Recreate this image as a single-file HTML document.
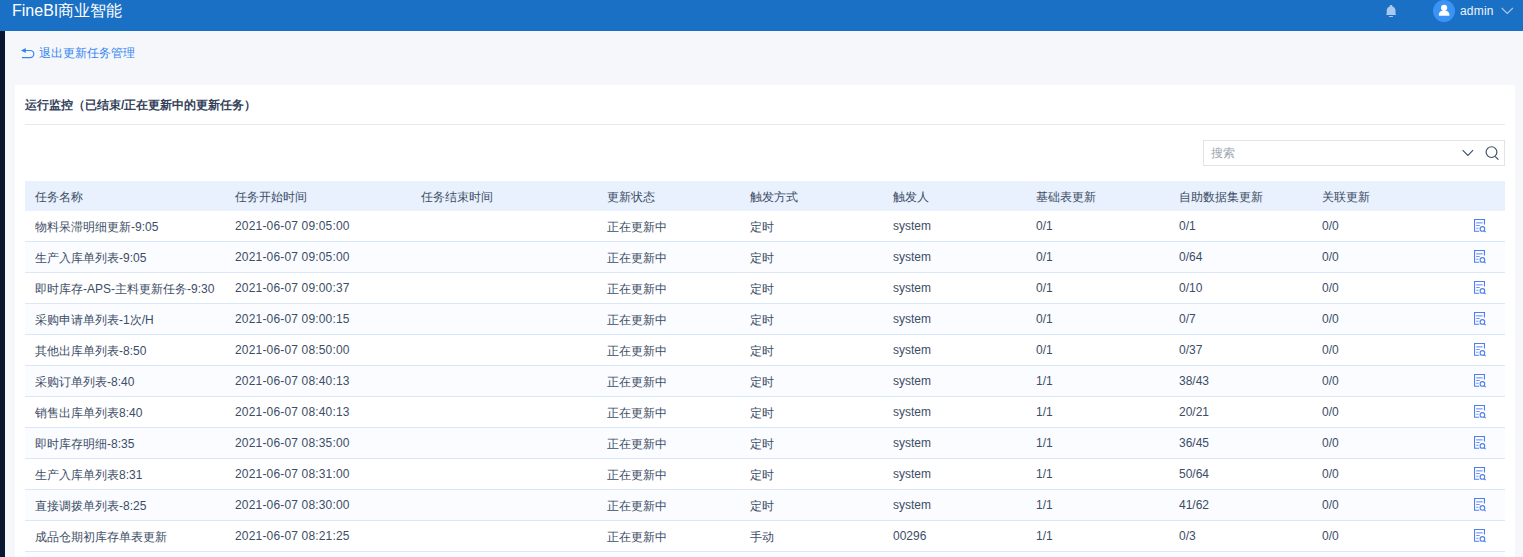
<!DOCTYPE html>
<html><head><meta charset="utf-8">
<style>
*{box-sizing:border-box;margin:0;padding:0}
html,body{width:1523px;height:557px;overflow:hidden;background:#f5f7fa;font-family:"Liberation Sans",sans-serif;font-size:12px;color:#3d4d66}
.hdr{position:absolute;left:0;top:0;width:1523px;height:31px;background:#1a70c5}
.logo{position:absolute;left:12px;top:0;height:22px;line-height:22px;font-size:16px;color:#fff}
.bell{position:absolute;left:1385px;top:4px}
.avatar{position:absolute;left:1433px;top:0;width:22px;height:22px;border-radius:50%;background:#3b94f4}
.uname{position:absolute;left:1460px;top:3px;font-size:12px;line-height:16px;color:#eef4fb;letter-spacing:0.2px}
.uchev{position:absolute;left:1501px;top:7px}
.strip{position:absolute;left:0;top:31px;width:5px;height:526px;background:#0a1631}
.back{position:absolute;left:21px;top:45px;height:16px;line-height:16px;color:#3685f2}
.back svg{position:absolute;left:0;top:3px}
.back span{position:absolute;left:18px;top:0;white-space:nowrap}
.panel{position:absolute;left:15px;top:85px;width:1500px;height:480px;background:#fff}
.title{position:absolute;left:25px;top:97px;line-height:16px;font-weight:bold;color:#33415a;white-space:nowrap}
.divider{position:absolute;left:25px;top:124px;width:1480px;height:1px;background:#e6e9ee}
.search{position:absolute;left:1203px;top:140px;width:302px;height:26px;border:1px solid #e0e3e8;background:#fff}
.search .ph{position:absolute;left:7px;top:4px;line-height:16px;color:#9ea6b2}
table{position:absolute;left:25px;top:181px;width:1480px;border-collapse:separate;border-spacing:0;table-layout:fixed}
th,td{line-height:16px;text-align:left;padding:0 0 0 10px;white-space:nowrap;overflow:hidden;font-weight:normal}
th{height:30px;background:#e8f1fd}
td{height:31px;border-bottom:1px solid #d8e7fa}
tr.a td{background:#fafcff}
td.d{letter-spacing:0.17px}
td.c,th{padding-top:2px}
.ic{display:block;margin-left:8px;position:relative;top:-1px}
</style></head><body>
<div class="hdr"></div>
<div class="logo">FineBI商业智能</div>
<svg class="bell" width="12" height="14" viewBox="0 0 12 14"><rect x="4.9" y="0.9" width="2.4" height="2" rx="0.7" fill="#a9c9ee"/><path d="M0.8 10.9L1.7 10V6.6C1.7 4.1 3.6 2.3 6.1 2.3S10.5 4.1 10.5 6.6V10L11.4 10.9Z" fill="#a9c9ee"/><rect x="3.9" y="12.1" width="4.2" height="1" rx="0.5" fill="#a9c9ee"/></svg>
<div class="avatar"><svg width="22" height="22" viewBox="0 0 22 22"><circle cx="11.1" cy="7.8" r="3.1" fill="#fff"/><path d="M5.9 15.7V14.2C5.9 11.9 8 10.5 11.1 10.5S16.3 11.9 16.3 14.2V15.7Z" fill="#fff"/></svg></div>
<div class="uname">admin</div>
<svg class="uchev" width="13" height="8" viewBox="0 0 13 8"><path d="M.7 1l5.6 5.4 5.6-5.4" fill="none" stroke="#a9c9ee" stroke-width="1.1"/></svg>
<div class="strip"></div>
<div class="back"><svg width="14" height="11" viewBox="0 0 14 11"><path d="M4 2.5H9.25A3.55 3.55 0 0 1 9.25 9.6H1" fill="none" stroke="#3685f2" stroke-width="1.2"/><path d="M0 2.5L4.8 0V5z" fill="#3685f2"/></svg><span>退出更新任务管理</span></div>
<div class="panel"></div>
<div class="title">运行监控（已结束/正在更新中的更新任务）</div>
<div class="divider"></div>
<div class="search"><span class="ph">搜索</span>
<svg style="position:absolute;left:258px;top:8px" width="13" height="8" viewBox="0 0 13 8"><path d="M.6 1.1l5.3 5.3 5.2-5.3" fill="none" stroke="#3d4d66" stroke-width="1.05"/></svg>
<svg style="position:absolute;left:280px;top:5px" width="16" height="16" viewBox="0 0 16 16"><circle cx="7.5" cy="6.1" r="5.4" fill="none" stroke="#3d4d66" stroke-width="1.15"/><path d="M11.3 10.6l3.1 3" stroke="#3d4d66" stroke-width="1.3"/></svg>
</div>
<table>
<colgroup><col style="width:200px"><col style="width:186px"><col style="width:186px"><col style="width:143px"><col style="width:143px"><col style="width:143px"><col style="width:143px"><col style="width:143px"><col style="width:143px"><col></colgroup>
<thead><tr><th>任务名称</th><th>任务开始时间</th><th>任务结束时间</th><th>更新状态</th><th>触发方式</th><th>触发人</th><th>基础表更新</th><th>自助数据集更新</th><th>关联更新</th><th></th></tr></thead>
<tbody>
<tr><td class="c">物料呆滞明细更新-9:05</td><td class="d">2021-06-07 09:05:00</td><td></td><td class="c">正在更新中</td><td class="c">定时</td><td>system</td><td>0/1</td><td>0/1</td><td>0/0</td><td><svg class="ic" width="14" height="15" viewBox="0 0 14 15"><path d="M6.2 13.3H1.55V1.55h9.9V6.6" fill="none" stroke="#4a80f2" stroke-width="1.1"/><path d="M3.2 4.8h6.4" stroke="#98a8f6" stroke-width="1.5"/><path d="M3.2 7.5h3.5M3.2 10.2h2.3" stroke="#7590f4" stroke-width="1.1"/><circle cx="9.4" cy="10.9" r="2.3" fill="none" stroke="#4a80f2" stroke-width="1.1"/><path d="M11.1 12.6l1.5 1.5" stroke="#4a80f2" stroke-width="1.1"/></svg></td></tr>
<tr class="a"><td class="c">生产入库单列表-9:05</td><td class="d">2021-06-07 09:05:00</td><td></td><td class="c">正在更新中</td><td class="c">定时</td><td>system</td><td>0/1</td><td>0/64</td><td>0/0</td><td><svg class="ic" width="14" height="15" viewBox="0 0 14 15"><path d="M6.2 13.3H1.55V1.55h9.9V6.6" fill="none" stroke="#4a80f2" stroke-width="1.1"/><path d="M3.2 4.8h6.4" stroke="#98a8f6" stroke-width="1.5"/><path d="M3.2 7.5h3.5M3.2 10.2h2.3" stroke="#7590f4" stroke-width="1.1"/><circle cx="9.4" cy="10.9" r="2.3" fill="none" stroke="#4a80f2" stroke-width="1.1"/><path d="M11.1 12.6l1.5 1.5" stroke="#4a80f2" stroke-width="1.1"/></svg></td></tr>
<tr><td class="c">即时库存-APS-主料更新任务-9:30</td><td class="d">2021-06-07 09:00:37</td><td></td><td class="c">正在更新中</td><td class="c">定时</td><td>system</td><td>0/1</td><td>0/10</td><td>0/0</td><td><svg class="ic" width="14" height="15" viewBox="0 0 14 15"><path d="M6.2 13.3H1.55V1.55h9.9V6.6" fill="none" stroke="#4a80f2" stroke-width="1.1"/><path d="M3.2 4.8h6.4" stroke="#98a8f6" stroke-width="1.5"/><path d="M3.2 7.5h3.5M3.2 10.2h2.3" stroke="#7590f4" stroke-width="1.1"/><circle cx="9.4" cy="10.9" r="2.3" fill="none" stroke="#4a80f2" stroke-width="1.1"/><path d="M11.1 12.6l1.5 1.5" stroke="#4a80f2" stroke-width="1.1"/></svg></td></tr>
<tr class="a"><td class="c">采购申请单列表-1次/H</td><td class="d">2021-06-07 09:00:15</td><td></td><td class="c">正在更新中</td><td class="c">定时</td><td>system</td><td>0/1</td><td>0/7</td><td>0/0</td><td><svg class="ic" width="14" height="15" viewBox="0 0 14 15"><path d="M6.2 13.3H1.55V1.55h9.9V6.6" fill="none" stroke="#4a80f2" stroke-width="1.1"/><path d="M3.2 4.8h6.4" stroke="#98a8f6" stroke-width="1.5"/><path d="M3.2 7.5h3.5M3.2 10.2h2.3" stroke="#7590f4" stroke-width="1.1"/><circle cx="9.4" cy="10.9" r="2.3" fill="none" stroke="#4a80f2" stroke-width="1.1"/><path d="M11.1 12.6l1.5 1.5" stroke="#4a80f2" stroke-width="1.1"/></svg></td></tr>
<tr><td class="c">其他出库单列表-8:50</td><td class="d">2021-06-07 08:50:00</td><td></td><td class="c">正在更新中</td><td class="c">定时</td><td>system</td><td>0/1</td><td>0/37</td><td>0/0</td><td><svg class="ic" width="14" height="15" viewBox="0 0 14 15"><path d="M6.2 13.3H1.55V1.55h9.9V6.6" fill="none" stroke="#4a80f2" stroke-width="1.1"/><path d="M3.2 4.8h6.4" stroke="#98a8f6" stroke-width="1.5"/><path d="M3.2 7.5h3.5M3.2 10.2h2.3" stroke="#7590f4" stroke-width="1.1"/><circle cx="9.4" cy="10.9" r="2.3" fill="none" stroke="#4a80f2" stroke-width="1.1"/><path d="M11.1 12.6l1.5 1.5" stroke="#4a80f2" stroke-width="1.1"/></svg></td></tr>
<tr class="a"><td class="c">采购订单列表-8:40</td><td class="d">2021-06-07 08:40:13</td><td></td><td class="c">正在更新中</td><td class="c">定时</td><td>system</td><td>1/1</td><td>38/43</td><td>0/0</td><td><svg class="ic" width="14" height="15" viewBox="0 0 14 15"><path d="M6.2 13.3H1.55V1.55h9.9V6.6" fill="none" stroke="#4a80f2" stroke-width="1.1"/><path d="M3.2 4.8h6.4" stroke="#98a8f6" stroke-width="1.5"/><path d="M3.2 7.5h3.5M3.2 10.2h2.3" stroke="#7590f4" stroke-width="1.1"/><circle cx="9.4" cy="10.9" r="2.3" fill="none" stroke="#4a80f2" stroke-width="1.1"/><path d="M11.1 12.6l1.5 1.5" stroke="#4a80f2" stroke-width="1.1"/></svg></td></tr>
<tr><td class="c">销售出库单列表8:40</td><td class="d">2021-06-07 08:40:13</td><td></td><td class="c">正在更新中</td><td class="c">定时</td><td>system</td><td>1/1</td><td>20/21</td><td>0/0</td><td><svg class="ic" width="14" height="15" viewBox="0 0 14 15"><path d="M6.2 13.3H1.55V1.55h9.9V6.6" fill="none" stroke="#4a80f2" stroke-width="1.1"/><path d="M3.2 4.8h6.4" stroke="#98a8f6" stroke-width="1.5"/><path d="M3.2 7.5h3.5M3.2 10.2h2.3" stroke="#7590f4" stroke-width="1.1"/><circle cx="9.4" cy="10.9" r="2.3" fill="none" stroke="#4a80f2" stroke-width="1.1"/><path d="M11.1 12.6l1.5 1.5" stroke="#4a80f2" stroke-width="1.1"/></svg></td></tr>
<tr class="a"><td class="c">即时库存明细-8:35</td><td class="d">2021-06-07 08:35:00</td><td></td><td class="c">正在更新中</td><td class="c">定时</td><td>system</td><td>1/1</td><td>36/45</td><td>0/0</td><td><svg class="ic" width="14" height="15" viewBox="0 0 14 15"><path d="M6.2 13.3H1.55V1.55h9.9V6.6" fill="none" stroke="#4a80f2" stroke-width="1.1"/><path d="M3.2 4.8h6.4" stroke="#98a8f6" stroke-width="1.5"/><path d="M3.2 7.5h3.5M3.2 10.2h2.3" stroke="#7590f4" stroke-width="1.1"/><circle cx="9.4" cy="10.9" r="2.3" fill="none" stroke="#4a80f2" stroke-width="1.1"/><path d="M11.1 12.6l1.5 1.5" stroke="#4a80f2" stroke-width="1.1"/></svg></td></tr>
<tr><td class="c">生产入库单列表8:31</td><td class="d">2021-06-07 08:31:00</td><td></td><td class="c">正在更新中</td><td class="c">定时</td><td>system</td><td>1/1</td><td>50/64</td><td>0/0</td><td><svg class="ic" width="14" height="15" viewBox="0 0 14 15"><path d="M6.2 13.3H1.55V1.55h9.9V6.6" fill="none" stroke="#4a80f2" stroke-width="1.1"/><path d="M3.2 4.8h6.4" stroke="#98a8f6" stroke-width="1.5"/><path d="M3.2 7.5h3.5M3.2 10.2h2.3" stroke="#7590f4" stroke-width="1.1"/><circle cx="9.4" cy="10.9" r="2.3" fill="none" stroke="#4a80f2" stroke-width="1.1"/><path d="M11.1 12.6l1.5 1.5" stroke="#4a80f2" stroke-width="1.1"/></svg></td></tr>
<tr class="a"><td class="c">直接调拨单列表-8:25</td><td class="d">2021-06-07 08:30:00</td><td></td><td class="c">正在更新中</td><td class="c">定时</td><td>system</td><td>1/1</td><td>41/62</td><td>0/0</td><td><svg class="ic" width="14" height="15" viewBox="0 0 14 15"><path d="M6.2 13.3H1.55V1.55h9.9V6.6" fill="none" stroke="#4a80f2" stroke-width="1.1"/><path d="M3.2 4.8h6.4" stroke="#98a8f6" stroke-width="1.5"/><path d="M3.2 7.5h3.5M3.2 10.2h2.3" stroke="#7590f4" stroke-width="1.1"/><circle cx="9.4" cy="10.9" r="2.3" fill="none" stroke="#4a80f2" stroke-width="1.1"/><path d="M11.1 12.6l1.5 1.5" stroke="#4a80f2" stroke-width="1.1"/></svg></td></tr>
<tr><td class="c">成品仓期初库存单表更新</td><td class="d">2021-06-07 08:21:25</td><td></td><td class="c">正在更新中</td><td class="c">手动</td><td>00296</td><td>1/1</td><td>0/3</td><td>0/0</td><td><svg class="ic" width="14" height="15" viewBox="0 0 14 15"><path d="M6.2 13.3H1.55V1.55h9.9V6.6" fill="none" stroke="#4a80f2" stroke-width="1.1"/><path d="M3.2 4.8h6.4" stroke="#98a8f6" stroke-width="1.5"/><path d="M3.2 7.5h3.5M3.2 10.2h2.3" stroke="#7590f4" stroke-width="1.1"/><circle cx="9.4" cy="10.9" r="2.3" fill="none" stroke="#4a80f2" stroke-width="1.1"/><path d="M11.1 12.6l1.5 1.5" stroke="#4a80f2" stroke-width="1.1"/></svg></td></tr>
<tr class="a"><td class="c"></td><td class="d"></td><td></td><td class="c"></td><td class="c"></td><td></td><td></td><td></td><td></td><td></td></tr>
</tbody></table>

</body></html>
